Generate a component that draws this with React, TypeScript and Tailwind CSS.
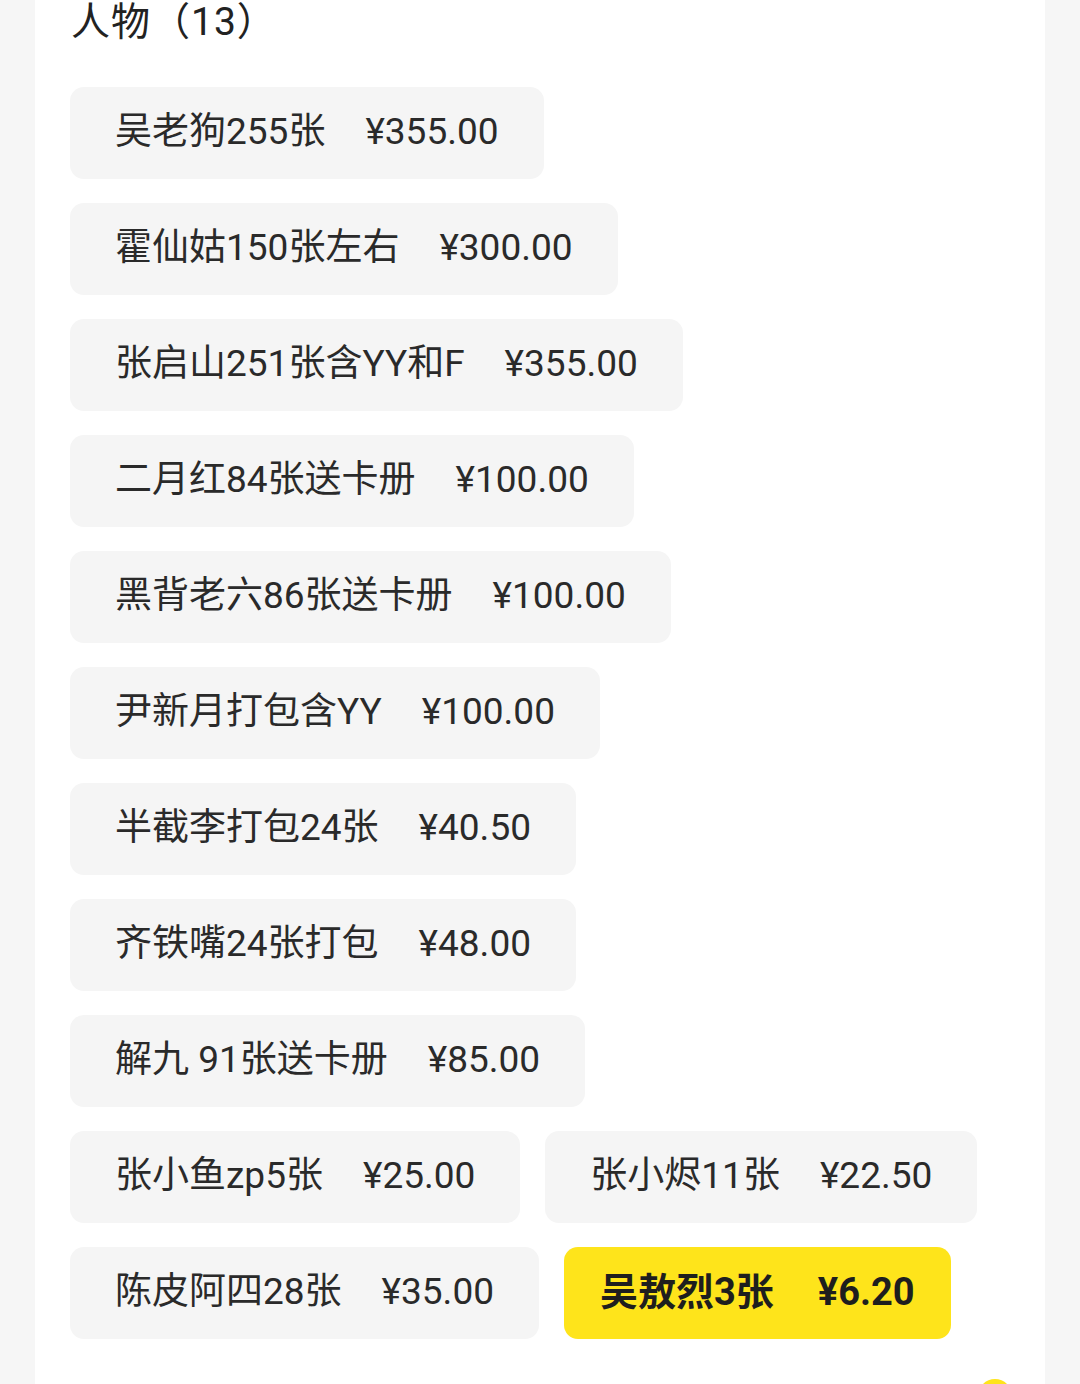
import React from 'react';

type Item = { name: string; price: string; active?: boolean };

const items: Item[] = [
  { name: '吴老狗255张', price: '¥355.00' },
  { name: '霍仙姑150张左右', price: '¥300.00' },
  { name: '张启山251张含YY和F', price: '¥355.00' },
  { name: '二月红84张送卡册', price: '¥100.00' },
  { name: '黑背老六86张送卡册', price: '¥100.00' },
  { name: '尹新月打包含YY', price: '¥100.00' },
  { name: '半截李打包24张', price: '¥40.50' },
  { name: '齐铁嘴24张打包', price: '¥48.00' },
  { name: '解九 91张送卡册', price: '¥85.00' },
  { name: '张小鱼zp5张', price: '¥25.00' },
  { name: '张小烬11张', price: '¥22.50' },
  { name: '陈皮阿四28张', price: '¥35.00' },
  { name: '吴敖烈3张', price: '¥6.20', active: true },
];

function Chip({ item }: { item: Item }) {
  // selected chip is yellow with bold text and a bit less padding
  const cls = item.active
    ? 'bg-[#fee41b] px-[36px] font-bold text-[38px] text-[#1e1e1e]'
    : 'bg-[#f5f5f5] px-[45px] text-[37px] text-[#2a2a2a]';
  return (
    <div className={`flex h-[92px] items-center whitespace-pre rounded-[14px] pb-[3px] leading-none ${cls}`}>
      <span>{item.name}</span>
      <span className={item.active ? 'ml-[44px]' : 'ml-[40px]'}>{item.price}</span>
    </div>
  );
}

export default function App() {
  return (
    <div
      className="relative min-h-[1384px] overflow-hidden bg-[#f6f6f6]"
      style={{ fontFamily: 'Roboto, "Noto Sans CJK SC", sans-serif' }}
    >
      <div className="mx-[35px] min-h-[1384px] bg-white px-[35px]">
        <h2 className="pl-[1px] text-[39px] leading-[44px] tracking-[1px] text-[#222]">人物（13）</h2>
        <div className="mt-[43px] flex flex-wrap gap-x-[25px] gap-y-[24px]">
          {items.map((it) => (
            <Chip key={it.name} item={it} />
          ))}
        </div>
      </div>
      <div className="absolute left-[978px] top-[1379px] h-[34px] w-[34px] rounded-full bg-[#fee41b]" />
    </div>
  );
}
